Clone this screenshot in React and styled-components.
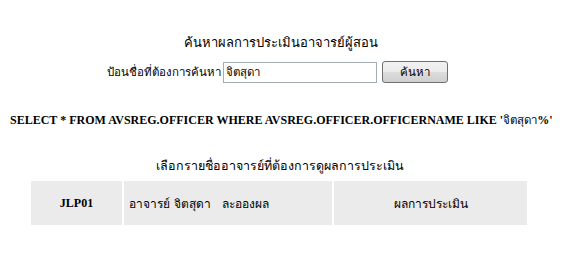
import React from 'react'
import styled, { createGlobalStyle } from 'styled-components'

const GlobalStyle = createGlobalStyle`
  body {
    margin: 0;
    background: #fff;
    font-family: Tahoma, "DejaVu Sans", "Noto Sans", sans-serif;
    color: #000;
  }
`

const Page = styled.div`
  width: 566px;
  padding-top: 33px;
  display: flex;
  flex-direction: column;
  align-items: center;
`

const Title = styled.div`
  font-size: 13px;
  height: 20px;
  line-height: 20px;
  margin-left: -4px;
`

const SearchForm = styled.form`
  display: flex;
  align-items: center;
  margin-top: 8px;
  margin-left: -11px;
  font-size: 11.5px;
`

const Label = styled.span`
  margin-right: 2px;
`

const TextInput = styled.input`
  width: 148px;
  height: 17px;
  padding: 1px 2px;
  border: 1px solid #a5acb5;
  font-family: inherit;
  font-size: 11.5px;
  outline: none;
`

const SearchButton = styled.button`
  margin-left: 5px;
  width: 66px;
  height: 22px;
  border: 1px solid #707070;
  border-radius: 3px;
  background: linear-gradient(#f2f2f2, #ebebeb 50%, #dddddd 50%, #cfcfcf);
  font-family: inherit;
  font-size: 11.5px;
  padding: 0;
`

const Query = styled.div`
  align-self: flex-start;
  margin: 28px 0 0 10px;
  font-family: "Liberation Serif", serif;
  font-weight: bold;
  font-size: 12px;
  white-space: nowrap;
`

const ThaiPart = styled.span`
  font-weight: normal;
  font-size: 11.5px;
`

const Subtitle = styled.div`
  margin-top: 27px;
  margin-left: -6px;
  font-size: 12.5px;
  height: 20px;
  line-height: 20px;
`

const Table = styled.table`
  margin-top: 3px;
  margin-left: -8px;
  border-spacing: 2px;
  font-size: 12px;
`

const Cell = styled.td`
  background: #ebebeb;
  height: 44px;
  padding: 0;
  width: ${p => p.$w}px;
  text-align: ${p => p.$align || 'center'};
  padding-left: ${p => (p.$align === 'left' ? '5px' : '0')};
  font-family: ${p => (p.$serif ? '"Liberation Serif", serif' : 'inherit')};
  font-weight: ${p => (p.$serif ? 'bold' : 'normal')};
`

export default function App() {
  return (
    <>
      <GlobalStyle />
      <Page>
        <Title>ค้นหาผลการประเมินอาจารย์ผู้สอน</Title>
        <SearchForm onSubmit={e => e.preventDefault()}>
          <Label>ป้อนชื่อที่ต้องการค้นหา</Label>
          <TextInput defaultValue="จิตสุดา" />
          <SearchButton type="submit">ค้นหา</SearchButton>
        </SearchForm>
        <Query>
          SELECT * FROM AVSREG.OFFICER WHERE AVSREG.OFFICER.OFFICERNAME LIKE '<ThaiPart>จิตสุดา</ThaiPart>%'
        </Query>
        <Subtitle>เลือกรายชื่ออาจารย์ที่ต้องการดูผลการประเมิน</Subtitle>
        <Table>
          <tbody>
            <tr>
              <Cell $w={91} $serif>JLP01</Cell>
              <Cell $w={203} $align="left">อาจารย์ จิตสุดา&nbsp;&nbsp; ละอองผล</Cell>
              <Cell $w={193}>ผลการประเมิน</Cell>
            </tr>
          </tbody>
        </Table>
      </Page>
    </>
  )
}
